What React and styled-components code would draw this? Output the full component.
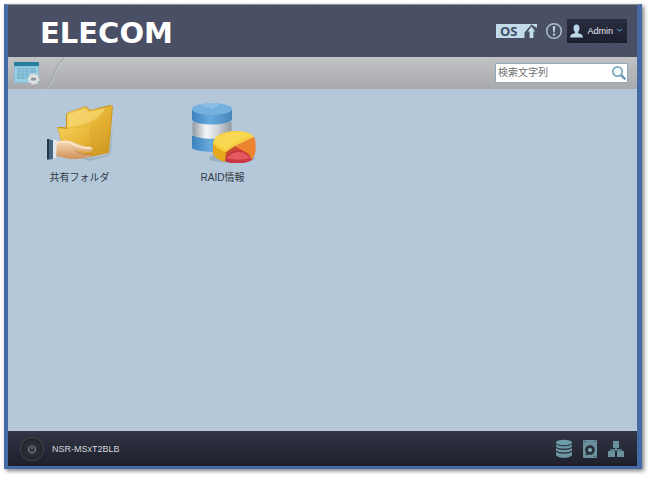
import React, { useState } from 'react'
import styled, { createGlobalStyle } from 'styled-components'

const apps = [
  { id: 'shared', label: '共有フォルダ', icon: <SharedFolderIcon /> },
  { id: 'raid', label: 'RAID情報', icon: <RaidIcon /> },
]

const statusLinks = [
  { id: 'storage', label: 'ストレージ', icon: <StorageIcon /> },
  { id: 'disk', label: 'ディスク', icon: <DiskIcon /> },
  { id: 'network', label: 'ネットワーク', icon: <NetworkIcon /> },
]

const App = () => {
  const [query, setQuery] = useState('')

  return (
    <>
      <GlobalStyle />
      <Page>
        <Window>
          <Header>
            <Logo>ELECOM</Logo>
            <HeaderActions>
              <OsButton type="button" aria-label="OS">
                <OsLabel>OS</OsLabel>
                <UpdateIcon />
              </OsButton>
              <IconButton type="button" aria-label="通知">
                <AlertIcon />
              </IconButton>
              <UserButton type="button">
                <UserIcon />
                Admin
                <ChevronIcon />
              </UserButton>
            </HeaderActions>
          </Header>
          <Toolbar>
            <ToolbarStart>
              <IconButton type="button" aria-label="デスクトップ">
                <DesktopIcon />
              </IconButton>
              <SlashIcon />
            </ToolbarStart>
            <SearchBox>
              <SearchInput
                type="text"
                aria-label="検索文字列"
                placeholder="検索文字列"
                value={query}
                onChange={e => setQuery(e.target.value)}
              />
              <IconButton type="button" aria-label="検索">
                <SearchIcon />
              </IconButton>
            </SearchBox>
          </Toolbar>
          <Desktop>
            {apps.map(app => (
              <AppButton type="button" key={app.id}>
                {app.icon}
                <AppLabel>{app.label}</AppLabel>
              </AppButton>
            ))}
          </Desktop>
          <Footer>
            <FooterGroup>
              <PowerButton type="button" aria-label="電源">
                <PowerIcon />
              </PowerButton>
              <HostName>NSR-MSxT2BLB</HostName>
            </FooterGroup>
            <FooterGroup>
              {statusLinks.map(link => (
                <IconButton type="button" key={link.id} aria-label={link.label}>
                  {link.icon}
                </IconButton>
              ))}
            </FooterGroup>
          </Footer>
        </Window>
      </Page>
    </>
  )
}

export default App

function UpdateIcon() {
  return (
    <svg width="20" height="18" viewBox="0 0 20 18">
      <path d="M0 2H20V6L14.500 2.500L7.500 10.500V16H0Z" fill="#c3dcea" />
      <path
        d="M14.500 3.500L19.200 10H17V16.500H12V10H9.700Z"
        fill="#c3dcea"
        stroke="#4b5168"
        strokeWidth="1.200"
      />
    </svg>
  )
}

function AlertIcon() {
  return (
    <svg width="18" height="18" viewBox="0 0 18 18">
      <circle cx="9" cy="9" r="7.300" fill="none" stroke="#a9c2d1" strokeWidth="1.500" />
      <path d="M7.700 4.200H10.300L9.700 10.400H8.300Z" fill="#b9d0dd" />
      <circle cx="9" cy="12.600" r="1.200" fill="#b9d0dd" />
    </svg>
  )
}

function UserIcon() {
  return (
    <svg width="15" height="15" viewBox="0 0 15 15">
      <path
        d="M7.500 0.500C9.800 0.500 10.700 2.300 10.500 4.500C10.300 6.200 9.600 7.400 9 8V9C10 9.700 13.800 9.500 14 13.500H1C1.200 9.500 5 9.700 6 9V8C5.400 7.400 4.700 6.200 4.500 4.500C4.300 2.300 5.200 0.500 7.500 0.500Z"
        fill="#b9d7e8"
      />
    </svg>
  )
}

function ChevronIcon() {
  return (
    <svg width="7" height="6" viewBox="0 0 7 6">
      <path d="M1 1L3.500 3L6 1" fill="none" stroke="#4e7ba0" strokeWidth="1.200" />
    </svg>
  )
}

function DesktopIcon() {
  return (
    <svg width="28" height="24" viewBox="0 0 28 24">
      <rect x="1" y="2" width="25" height="20" fill="#83bfd8" />
      <rect x="2" y="6" width="23" height="15" fill="#9ccfe2" />
      <rect x="1" y="1" width="25" height="4" fill="#287e9e" />
      <rect x="4" y="7" width="19" height="11" fill="#76b5cf" />
      <path d="M4 9H23M4 12H23M4 15H18M8 7V18M12 7V18M16 7V18" stroke="#91c7dc" />
      <circle cx="20.500" cy="18" r="5" fill="#dfe2e3" />
      <circle cx="20.500" cy="18" r="5.300" fill="none" stroke="#dfe1e2" strokeWidth="1.300" strokeDasharray="2 2" />
      <rect x="18" y="16.700" width="5" height="2.800" rx="1" fill="#8c9396" />
    </svg>
  )
}

function SlashIcon() {
  return (
    <svg width="22" height="32" viewBox="0 0 22 32">
      <path d="M1 32C8 25 9 9 19 1" fill="none" stroke="#999c9f" />
      <path d="M2 32C9 25 10 9 20 1" fill="none" stroke="#c4c7c9" />
    </svg>
  )
}

function SearchIcon() {
  return (
    <svg width="16" height="16" viewBox="0 0 16 16">
      <circle cx="6.500" cy="6.500" r="4.700" fill="#f5fafc" stroke="#7ba9c0" strokeWidth="1.700" />
      <path d="M10 10L14.300 14.300" stroke="#6597b2" strokeWidth="2.400" />
    </svg>
  )
}

function SharedFolderIcon() {
  return (
    <svg width="72" height="62" viewBox="0 0 72 62">
      <defs>
        <linearGradient id="folder" x1="0" y1="0" x2="1" y2="1">
          <stop offset="0" stopColor="#f4d05a" />
          <stop offset="0.500" stopColor="#e6b436" />
          <stop offset="1" stopColor="#cb941f" />
        </linearGradient>
        <linearGradient id="skin" x1="0" y1="0" x2="0" y2="1">
          <stop offset="0" stopColor="#f8dcb8" />
          <stop offset="1" stopColor="#cf9258" />
        </linearGradient>
      </defs>
      <path d="M18 51L45 57L67 53L69 20L65 55L46 60Z" fill="#8296a3" opacity="0.400" />
      <path d="M22 26V13L25 11L42 5L46 9L66 4L69 5L65 52L46 56L20 50L13 26Z" fill="#ce9825" />
      <path d="M23 27V13L26 11L42 6L45 10L68 5L64 51L45 54Z" fill="url(#folder)" />
      <path d="M24 14L42 7L44 11L61 7C57 17 45 24 24 26Z" fill="#fbe083" opacity="0.550" />
      <path d="M14 27L23 28L46 26L65 25L63 51L45 55L20 50Z" fill="url(#folder)" />
      <path d="M46 26L65 24L63 51L45 55Z" fill="#d39d25" opacity="0.350" />
      <path
        d="M12 41C16 40 21 39 26 40C31 41 35 44 40 45C44 46 49 45 49 48C49 52 39 51 33 49C36 52 42 54 49 53C45 57 37 58 29 58C22 58 18 56 12 55Z"
        fill="url(#skin)"
      />
      <path d="M12 42C19 40 26 41 31 44C36 47 41 47 47 47" fill="none" stroke="#ffe9ca" strokeWidth="1.500" />
      <path d="M31 49C35 53 41 54 48 53" fill="none" stroke="#b77842" strokeWidth="0.800" />
      <path d="M3 38L13 39L12 57L3 59Z" fill="#e1e7eb" />
      <path d="M3 38L9 39V58L3 59Z" fill="#466682" />
      <path d="M3 38L5 38V58H3Z" fill="#263644" />
    </svg>
  )
}

function RaidIcon() {
  return (
    <svg width="72" height="62" viewBox="0 0 72 62">
      <defs>
        <linearGradient id="blueDrum">
          <stop offset="0" stopColor="#3d81bd" />
          <stop offset="0.450" stopColor="#68aadd" />
          <stop offset="1" stopColor="#4684ba" />
        </linearGradient>
        <linearGradient id="silverDrum">
          <stop offset="0" stopColor="#9197a0" />
          <stop offset="0.350" stopColor="#f5f6f7" />
          <stop offset="0.650" stopColor="#cfd3d8" />
          <stop offset="1" stopColor="#92999f" />
        </linearGradient>
      </defs>
      <ellipse cx="45" cy="57" rx="23" ry="5" fill="#748fa3" opacity="0.450" />
      <path d="M5 35V47C10 52 39 52 45 47V35Z" fill="url(#blueDrum)" />
      <path d="M5.500 21V34C11 39 39 39 44.500 34V21Z" fill="url(#silverDrum)" />
      <path d="M5 8V19C10 25 39 25 45 19V8Z" fill="url(#blueDrum)" />
      <ellipse cx="25" cy="8" rx="20" ry="6" fill="#75b1df" />
      <path d="M25 8L12 4C18 2 27 1 33 3Z" fill="#b3d8f1" opacity="0.350" />
      <path d="M26 41V53C29 58 34 60 38 61L40 49Z" fill="#e5a71b" />
      <path d="M26 42C27 34 38 30 49 30C58 30 64 32 67 36L48 45L39 51C32 49 28 46 26 42Z" fill="#f6ce3d" />
      <path d="M27 42C28 35 39 31 49 31C56 31 60 32 64 34L46 43L39 48Z" fill="#fae064" opacity="0.550" />
      <path d="M67 36C69 39 69 47 68 53L65 59L57 52L48 45Z" fill="#ee8330" />
      <path d="M48 45L39 51L38 60L50 50L65 59L62 53Z" fill="#c94d2c" />
      <path d="M38 60C41 52 46 49 51 49C57 49 62 54 65 59C59 63 45 64 38 60Z" fill="#c93542" />
      <path d="M40 57C43 53 48 51 52 51C56 51 61 54 63 57C57 59 46 59 40 57Z" fill="#e35b60" />
    </svg>
  )
}

function PowerIcon() {
  return (
    <svg width="10" height="10" viewBox="0 0 10 10">
      <path d="M3 2.500A3.500 3.500 0 1 0 7 2.500M5 1V5" fill="none" stroke="#777a82" strokeWidth="1.200" />
    </svg>
  )
}

function StorageIcon() {
  return (
    <svg width="18" height="20" viewBox="0 0 18 20">
      <ellipse cx="9" cy="3.500" rx="8" ry="2.700" fill="#6d9da9" />
      <path d="M1 5C3 8 15 8 17 5V7.500C15 10.500 3 10.500 1 7.500Z" fill="#6b97a3" />
      <path d="M1 8.800C3 11.800 15 11.800 17 8.800V11.300C15 14.300 3 14.300 1 11.300Z" fill="#6b97a3" />
      <path d="M1 12.600C3 15.600 15 15.600 17 12.600V16.300C15 19.700 3 19.700 1 16.300Z" fill="#6b97a3" />
    </svg>
  )
}

function DiskIcon() {
  return (
    <svg width="18" height="20" viewBox="0 0 18 20">
      <rect x="2" y="1" width="14" height="18" rx="1" fill="#6a919d" />
      <circle cx="9" cy="11" r="4.800" fill="#28303a" />
      <circle cx="9" cy="11" r="2" fill="#81a9b4" />
      <path d="M4 16L8 12L7 16Z" fill="#28303a" />
      <path d="M3.500 2.500H5M13 2.500H14.500M13 17.500H14.500" stroke="#344550" />
    </svg>
  )
}

function NetworkIcon() {
  return (
    <svg width="18" height="20" viewBox="0 0 18 20">
      <path d="M9 8V11M4 14V11H14V14" fill="none" stroke="#65919e" strokeWidth="1.500" />
      <rect x="6" y="2" width="6" height="7" fill="#6a919d" />
      <rect x="1" y="12" width="7" height="6" fill="#6a919d" />
      <rect x="10" y="12" width="7" height="6" fill="#6a919d" />
    </svg>
  )
}

const GlobalStyle = createGlobalStyle`
  * {
    box-sizing: border-box;
  }

  body {
    margin: 0;
    background: #fff;
    font-family: 'Liberation Sans', 'Noto Sans CJK JP', sans-serif;
  }

  button {
    padding: 0;
    border: 0;
    background: none;
    color: inherit;
    font-family: inherit;
    cursor: pointer;
  }

  svg {
    display: block;
    flex-shrink: 0;
  }
`

const Page = styled.div`
  display: flex;
  min-height: 100vh;
  padding: 4px 10px 10px 4px;
`

const Window = styled.div`
  display: flex;
  flex: 1;
  flex-direction: column;
  border: 4px solid #456ba6;
  border-top: 1px solid #8b909c;
  border-right-width: 5px;
  border-bottom-width: 3px;
  box-shadow: 2px 2px 4px rgba(0, 0, 0, 0.5);
`

const Header = styled.header`
  display: flex;
  align-items: center;
  justify-content: space-between;
  height: 52px;
  padding: 0 10px 0 32px;
  background: repeating-linear-gradient(
    45deg,
    #4b5066 0,
    #4b5066 2px,
    #484e64 2px,
    #484e64 4px
  );
`

const Logo = styled.div`
  padding-top: 4px;
  color: #fff;
  font: bold 29px/32px 'DejaVu Sans', sans-serif;
`

const HeaderActions = styled.div`
  display: flex;
  align-items: center;
  gap: 4px;
`

const OsButton = styled.button`
  display: flex;
  align-items: center;
  margin-right: 4px;
`

const OsLabel = styled.span`
  padding: 0 0 0 4px;
  background: #c3dcea;
  color: #3f5066;
  font: bold 13px/14px 'Noto Sans', sans-serif;
`

const IconButton = styled.button`
  display: flex;
  align-items: center;
`

const UserButton = styled.button`
  display: flex;
  align-items: center;
  gap: 3px;
  height: 24px;
  padding: 0 4px 0 2px;
  background: linear-gradient(#292d3f, #1c1f2e);
  color: #e4e8ee;
  font-size: 9px;
  line-height: 14px;
`

const Toolbar = styled.div`
  display: flex;
  align-items: center;
  justify-content: space-between;
  height: 32px;
  padding: 0 9px 0 5px;
  background: linear-gradient(#c1c3c5, #a7a9ac);
`

const ToolbarStart = styled.div`
  display: flex;
  align-items: center;
  gap: 4px;
`

const SearchBox = styled.div`
  display: flex;
  align-items: center;
  width: 133px;
  height: 20px;
  border: 1px solid #8fabba;
  background: #fff;
`

const SearchInput = styled.input`
  flex: 1;
  min-width: 0;
  padding: 0 2px;
  border: 0;
  outline: 0;
  background: transparent;
  color: #444;
  font: 10px/16px 'Liberation Sans', 'Noto Sans CJK JP', sans-serif;

  &::placeholder {
    color: #707070;
  }
`

const Desktop = styled.main`
  display: flex;
  flex: 1;
  align-content: flex-start;
  align-items: flex-start;
  flex-wrap: wrap;
  gap: 36px;
  padding: 12px 18px;
  background: #b4c8d9;
`

const AppButton = styled.button`
  display: flex;
  flex-direction: column;
  align-items: center;
  gap: 8px;
  width: 107px;
`

const AppLabel = styled.span`
  color: #303a44;
  font-size: 10px;
  line-height: 14px;
`

const Footer = styled.footer`
  display: flex;
  align-items: center;
  justify-content: space-between;
  height: 35px;
  padding: 0 12px;
  background: linear-gradient(#323545, #1d1f2b);
`

const FooterGroup = styled.div`
  display: flex;
  align-items: center;
  gap: 8px;
`

const PowerButton = styled.button`
  display: flex;
  align-items: center;
  justify-content: center;
  width: 24px;
  height: 24px;
  border: 1px solid #454850;
  border-radius: 50%;
  background: radial-gradient(#363840, #1b1c23);
`

const HostName = styled.span`
  color: #d4d7dc;
  font-size: 9px;
  line-height: 14px;
`
